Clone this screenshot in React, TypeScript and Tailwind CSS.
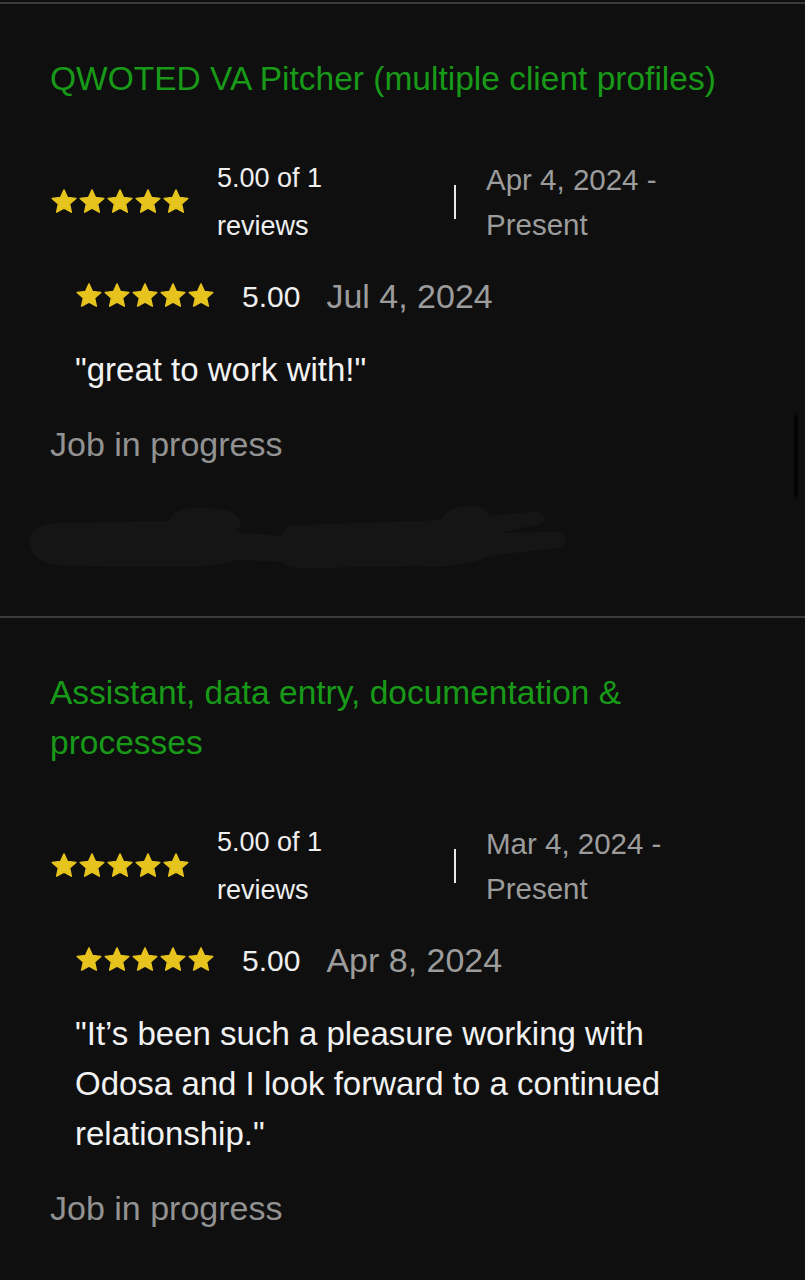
const font = { fontFamily: '"Liberation Sans", Arial, sans-serif' };

function Star({ size = 28 }: { size?: number }) {
  return (
    <svg width={size} height={size} viewBox="0 0 24 24" className="shrink-0">
      <path
        d="M12 1.6l3 6.5 7.15.8-5.32 4.84 1.5 7.03L12 17.2l-6.33 3.57 1.5-7.03L1.85 8.9 9 8.1z"
        fill="#e6c31d"
        stroke="#e6c31d"
        strokeWidth="1.2"
        strokeLinejoin="round"
      />
    </svg>
  );
}

function Stars() {
  return (
    <div className="flex shrink-0">
      {[1, 2, 3, 4, 5].map(i => <Star key={i} />)}
    </div>
  );
}

type Job = {
  title: string;
  started: string;
  reviewDate: string;
  quote: string;
  redacted?: boolean;
};

const jobs: Job[] = [
  {
    title: 'QWOTED VA Pitcher (multiple client profiles)',
    started: 'Apr 4, 2024 - Present',
    reviewDate: 'Jul 4, 2024',
    quote: '"great to work with!"',
    redacted: true,
  },
  {
    title: 'Assistant, data entry, documentation & processes',
    started: 'Mar 4, 2024 - Present',
    reviewDate: 'Apr 8, 2024',
    quote: '"It\u2019s been such a pleasure working with Odosa and I look forward to a continued relationship."',
  },
];

function JobCard({ job }: { job: Job }) {
  return (
    <div className="px-[50px] pt-[50px]">
      <h2 className="text-[33.5px] leading-[50px] text-[#189a18]">{job.title}</h2>

      <div className="flex items-center mt-[50px]">
        <div className="flex items-center w-[404px]">
          <Stars />
          <div className="ml-[27px] w-[120px] text-[27px] leading-[48px] text-[#efefef]">
            5.00 of 1 reviews
          </div>
        </div>
        <div className="w-[2px] h-[34px] bg-[#e8e8e8]" />
        <div className="ml-[30px] flex-1 text-[29.5px] leading-[45px] text-[#9c9c9c]">{job.started}</div>
      </div>

      <div className="flex items-center ml-[25px] mt-[24px] h-[44px]">
        <Stars />
        <span className="ml-[27px] text-[30px] text-[#efefef]">5.00</span>
        <span className="ml-[26px] text-[34px] text-[#9c9c9c]">{job.reviewDate}</span>
      </div>

      <p className="ml-[25px] mt-[27px] max-w-[620px] text-[33px] leading-[50px] text-[#f2f2f2]">{job.quote}</p>

      <div className="mt-[24px] text-[34px] leading-[50px] text-[#929292]">Job in progress</div>

      {job.redacted ? (
        <div className="-ml-[22px] mt-[31px] h-[116px]">
          <svg width="545" height="72" viewBox="28 500 545 72">
            <path
              d="M30 545 C28 530 40 524 60 523 L170 521 C172 510 185 507 205 508 C230 509 242 514 240 525 L236 532 L282 536 C283 528 290 525 300 525 L440 520 C445 510 460 505 475 506 C485 507 488 512 490 516 L530 512 C545 510 550 518 540 524 L500 533 L555 532 C570 533 570 546 555 548 L490 556 C470 565 440 568 420 566 L320 568 C300 569 290 568 282 562 L236 560 C220 566 190 568 150 567 L70 566 C45 566 32 558 30 545 Z"
              fill="#151515"
            />
          </svg>
        </div>
      ) : (
        <div className="h-[49px]" />
      )}
    </div>
  );
}

export default function App() {
  return (
    <div className="relative w-[805px] h-[1280px] overflow-hidden bg-[#0f0f0f]" style={font}>
      <div className="h-[2px] mt-[2px] bg-[#3b3b3b]" />
      <JobCard job={jobs[0]} />
      <div className="h-[2px] bg-[#3b3b3b]" />
      <JobCard job={jobs[1]} />

      {/* scroll indicator */}
      <div className="absolute right-[7px] top-[415px] w-[4px] h-[82px] rounded-full bg-[#040404]" />
    </div>
  );
}
